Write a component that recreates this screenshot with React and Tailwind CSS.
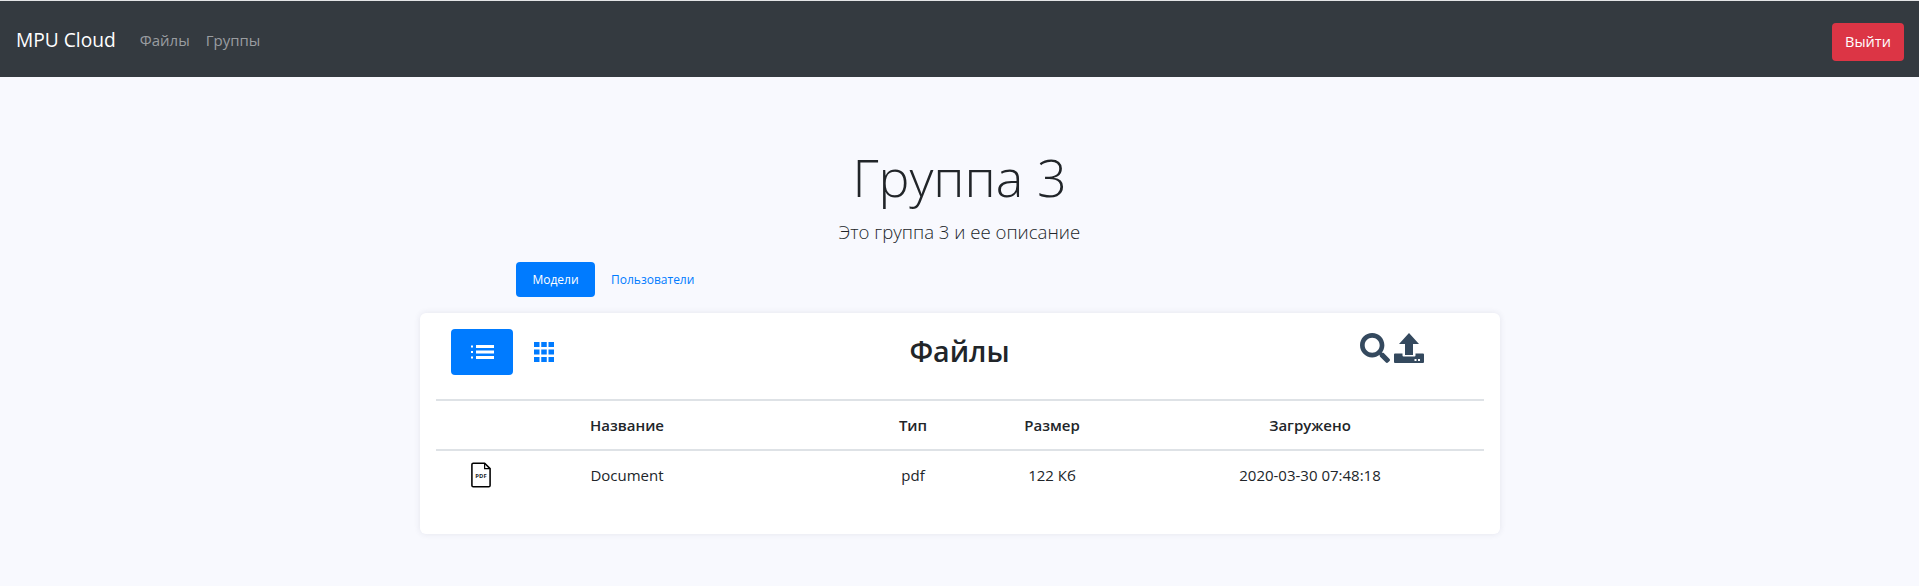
import { FaSearch } from "react-icons/fa"

const font = { fontFamily: '"Open Sans", "Noto Sans", sans-serif' }

function ListIcon() {
  return (
    <svg width="23" height="14" viewBox="0 0 23 14" fill="currentColor">
      <rect x="0" y="0.5" width="2" height="2" />
      <rect x="0" y="6" width="2" height="2" />
      <rect x="0" y="11.5" width="2" height="2" />
      <rect x="5" y="0" width="18" height="3" />
      <rect x="5" y="5.5" width="18" height="3" />
      <rect x="5" y="11" width="18" height="3" />
    </svg>
  )
}

function GridIcon() {
  return (
    <svg width="20" height="20" viewBox="0 0 20 20" fill="currentColor">
      <rect x="0" y="0" width="5.5" height="5" />
      <rect x="7.25" y="0" width="5.5" height="5" />
      <rect x="14.5" y="0" width="5.5" height="5" />
      <rect x="0" y="7.5" width="5.5" height="5" />
      <rect x="7.25" y="7.5" width="5.5" height="5" />
      <rect x="14.5" y="7.5" width="5.5" height="5" />
      <rect x="0" y="15" width="5.5" height="5" />
      <rect x="7.25" y="15" width="5.5" height="5" />
      <rect x="14.5" y="15" width="5.5" height="5" />
    </svg>
  )
}

function UploadIcon() {
  return (
    <svg width="30" height="30" viewBox="0 0 30 30" fill="currentColor">
      <path d="M15 0L25 11H19V22H11V11H5Z" />
      <path d="M1 20.5H8.5V22.5A1 1 0 0 0 9.5 23.5H20.5A1 1 0 0 0 21.5 22.5V20.5H29A1 1 0 0 1 30 21.5V29A1 1 0 0 1 29 30H1A1 1 0 0 1 0 29V21.5A1 1 0 0 1 1 20.5Z" />
      <rect x="20.5" y="26" width="2" height="2" fill="#fff" />
      <rect x="24" y="26" width="2" height="2" fill="#fff" />
    </svg>
  )
}

function PdfIcon() {
  return (
    <svg width="20" height="26" viewBox="0 0 22 28" fill="none">
      <path d="M2.5 1h12.5l6 6v18.5a1.5 1.5 0 0 1-1.5 1.5h-17a1.5 1.5 0 0 1-1.5-1.5v-23a1.5 1.5 0 0 1 1.5-1.5z" fill="#fff" stroke="#000" strokeWidth="1.7" />
      <path d="M15 1v6h6" fill="none" stroke="#000" strokeWidth="1.3" />
      <text x="11" y="17" textAnchor="middle" fontSize="6.5" fontWeight="700" fill="#212529" fontFamily="Open Sans, sans-serif">PDF</text>
    </svg>
  )
}

export default function App() {
  return (
    <div className="min-h-screen bg-[#f8f9fe] text-[#212529] font-['Open_Sans','Noto_Sans',sans-serif]" style={font}>
      {/* navbar */}
      <nav className="h-[77px] border-t-[1px] border-[#e3e4e6] bg-[#343a40] flex items-center justify-between pl-4 pr-[15px] pt-[5px]">
        <div className="flex items-center pb-[3px]">
          <span className="text-[19.2px] text-white">MPU Cloud</span>
          <span className="ml-[24px] text-[15px] text-[#9a9da0]">Файлы</span>
          <span className="ml-[16px] text-[15px] text-[#9a9da0]">Группы</span>
        </div>
        <button className="w-[72px] h-[38px] rounded bg-[#dc3545] text-white text-[14.5px]">Выйти</button>
      </nav>

      <div className="flex flex-col items-center">
        <h1 className="mt-[66px] text-[52px] leading-[67px] font-light">Группа 3</h1>
        <p className="mt-[8px] text-[18.6px] leading-[27px] font-light">Это группа 3 и ее описание</p>
      </div>

      <div className="mt-[17px] ml-[516px] flex items-center text-[12px]">
        <span className="w-[79px] h-[35px] rounded bg-[#007bff] text-white flex items-center justify-center">Модели</span>
        <span className="ml-[16px] text-[#007bff]">Пользователи</span>
      </div>

      <div className="mt-[16px] ml-[420px] w-[1080px] h-[221px] bg-white rounded-md shadow-[0_0_6px_rgba(50,50,93,0.1)] pt-[16px] px-[16px]">
        <div className="h-[70px] flex items-start">
          <div className="w-[62px] h-[46px] ml-[15px] rounded bg-[#007bff] text-white flex items-center justify-center">
            <ListIcon />
          </div>
          <div className="h-[46px] ml-[21px] flex items-center text-[#007bff]">
            <GridIcon />
          </div>
          <div className="flex-1 h-[46px] flex items-center justify-center pl-[5px] pb-[2px]">
            <h2 className="text-[28.6px] font-semibold">Файлы</h2>
          </div>
          <div className="h-[46px] mr-[60px] pb-[9px] flex items-center gap-1 text-[#34495e]">
            <FaSearch size={30} />
            <UploadIcon />
          </div>
        </div>

        <div className="border-t-2 border-[#dee2e6] h-[50px] grid grid-cols-[90px_202px_130px_110px_168px_348px] items-center text-center text-[15px] font-semibold">
          <span />
          <span>Название</span>
          <span />
          <span>Тип</span>
          <span>Размер</span>
          <span>Загружено</span>
        </div>
        <div className="border-t-2 border-[#dee2e6] h-[50px] grid grid-cols-[90px_202px_130px_110px_168px_348px] items-center justify-items-center text-center text-[15px]">
          <PdfIcon />
          <span>Document</span>
          <span />
          <span>pdf</span>
          <span>122 Кб</span>
          <span>2020-03-30 07:48:18</span>
        </div>
      </div>
    </div>
  )
}
